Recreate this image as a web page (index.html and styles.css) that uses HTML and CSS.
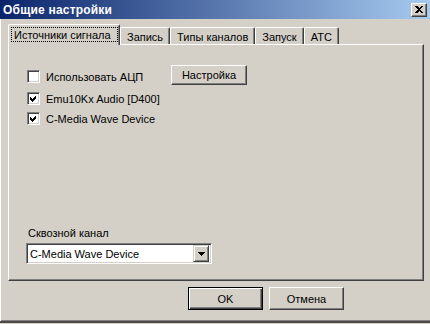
FILE: index.html
```html
<!DOCTYPE html>
<html>
    <head>
        <title>Общие настройки</title>
        <meta charset="UTF-8" />
        <link rel="stylesheet" href="styles.css">
    </head>
    <body>
        <div class="window">
            <div class="titlebar">
                <span class="title">Общие настройки</span>
                <button class="close-button" aria-label="Закрыть">
                    <svg width="8" height="7" viewBox="0 0 8 7" shape-rendering="crispEdges">
                        <path d="M0 0h2l2 2l2 -2h2l-3 3.5l3 3.5h-2l-2 -2l-2 2h-2l3 -3.5z" fill="#000"/>
                    </svg>
                </button>
            </div>

            <div class="dialog-body">
                <div class="tabs">
                    <div class="tab active"><span class="focus">Источники сигнала</span></div>
                    <div class="tab">Запись</div>
                    <div class="tab">Типы каналов</div>
                    <div class="tab">Запуск</div>
                    <div class="tab tab-last">АТС</div>
                </div>

                <div class="panel">
                    <div class="options">
                        <div class="option-row">
                            <label class="check">
                                <span class="box"></span>
                                Использовать АЦП
                            </label>
                            <button class="btn setup-button">Настройка</button>
                        </div>
                        <label class="check">
                            <span class="box checked">
                                <svg width="7" height="7" viewBox="0 0 7 7" shape-rendering="crispEdges">
                                    <path d="M0 2l2 2l4 -4v3l-4 4l-2 -2z" fill="#000"/>
                                </svg>
                            </span>
                            Emu10Kx Audio [D400]
                        </label>
                        <label class="check">
                            <span class="box checked">
                                <svg width="7" height="7" viewBox="0 0 7 7" shape-rendering="crispEdges">
                                    <path d="M0 2l2 2l4 -4v3l-4 4l-2 -2z" fill="#000"/>
                                </svg>
                            </span>
                            C-Media Wave Device
                        </label>
                    </div>

                    <div class="passthrough">
                        <div class="field-label">Сквозной канал</div>
                        <div class="combo">
                            <span class="combo-value">C-Media Wave Device</span>
                            <span class="combo-arrow">
                                <svg width="7" height="4" viewBox="0 0 7 4" shape-rendering="crispEdges">
                                    <path d="M0 0h7l-3.5 4z" fill="#000"/>
                                </svg>
                            </span>
                        </div>
                    </div>
                </div>

                <div class="button-container">
                    <button class="btn default">OK</button>
                    <button class="btn">Отмена</button>
                </div>
            </div>
        </div>
    </body>
</html>
```

FILE: styles.css
```css
body {
    margin: 0;
    background-color: #d4d0c8;
    font-family: "Liberation Sans", Arial, sans-serif;
    font-size: 11px;
    color: #000;
}
.window {
    width: 430px;
    height: 323px;
    box-sizing: border-box;
    display: flex;
    flex-direction: column;
    border-bottom: 2px solid #4a4a4a;
    box-shadow: 0 -1px 0 #808080 inset;
}
.titlebar {
    height: 19px;
    flex: none;
    display: flex;
    align-items: center;
    justify-content: space-between;
    padding-left: 3px;
    padding-right: 3px;
    background: linear-gradient(to right, #0a246a, #a6caf0);
}
.title {
    color: #fff;
    font-weight: bold;
    font-size: 12px;
    letter-spacing: 0.2px;
}
.close-button {
    width: 16px;
    height: 14px;
    padding: 0;
    display: flex;
    align-items: center;
    justify-content: center;
    background-color: #d4d0c8;
    border: 1px solid;
    border-color: #fff #404040 #404040 #fff;
    box-shadow: inset -1px -1px #808080;
}
.dialog-body {
    flex: 1;
    display: flex;
    flex-direction: column;
    padding: 5px 6px 0 7px;
    border-left: 1px solid #fff;
}
.tabs {
    display: flex;
    align-items: flex-end;
    height: 20px;
}
.tab {
    height: 17px;
    box-sizing: border-box;
    padding: 3px 6px 0 6px;
    border-top: 1px solid #fff;
    border-left: 1px solid #fff;
    border-right: 1px solid #404040;
    box-shadow: inset -1px 0 #808080;
    border-radius: 2px 2px 0 0;
    white-space: nowrap;
}
.tab.active {
    position: relative;
    z-index: 1;
    height: 21px;
    margin-bottom: -1px;
    width: 112px;
    padding: 2px 0 0 2px;
    background-color: #d4d0c8;
}
.focus {
    display: block;
    width: 107px;
    height: 15px;
    box-sizing: border-box;
    padding: 1px 0 0 2px;
    border: 1px dotted #000;
}
.panel {
    height: 237px;
    box-sizing: border-box;
    display: flex;
    flex-direction: column;
    justify-content: space-between;
    padding: 20px 0 16px 18px;
    border: 1px solid;
    border-color: #fff #404040 #404040 #fff;
    box-shadow: inset -1px -1px #808080;
}
.options {
    display: flex;
    flex-direction: column;
    gap: 7px;
}
.option-row {
    display: flex;
    align-items: flex-start;
}
.option-row .check {
    width: 144px;
    margin-top: 5px;
}
.check {
    display: flex;
    align-items: center;
    gap: 6px;
    height: 13px;
    white-space: nowrap;
}
.box {
    width: 13px;
    height: 13px;
    box-sizing: border-box;
    flex: none;
    display: flex;
    align-items: center;
    justify-content: center;
    background-color: #fff;
    border: 1px solid;
    border-color: #808080 #fff #fff #808080;
    box-shadow: inset 1px 1px #404040, inset -1px -1px #d4d0c8;
}
.btn {
    height: 23px;
    width: 75px;
    padding: 0;
    font-family: "Liberation Sans", Arial, sans-serif;
    font-size: 11px;
    color: #000;
    background-color: #d4d0c8;
    border: 1px solid;
    border-color: #fff #404040 #404040 #fff;
    box-shadow: inset -1px -1px #808080;
}
.setup-button {
    width: 76px;
    height: 20px;
}
.btn.default {
    border-color: #000;
    box-shadow: inset 1px 1px #fff, inset -1px -1px #404040, inset -2px -2px #808080;
}
.passthrough {
    margin-left: -1px;
}
.field-label {
    padding-left: 2px;
    line-height: 13px;
    margin-bottom: 3px;
}
.combo {
    width: 186px;
    height: 21px;
    box-sizing: border-box;
    display: flex;
    align-items: center;
    justify-content: space-between;
    padding: 2px;
    background-color: #fff;
    border: 1px solid;
    border-color: #808080 #fff #fff #808080;
    box-shadow: inset 1px 1px #404040, inset -1px -1px #d4d0c8;
}
.combo-value {
    padding-left: 1px;
}
.combo-arrow {
    width: 16px;
    height: 17px;
    box-sizing: border-box;
    display: flex;
    align-items: center;
    justify-content: center;
    background-color: #d4d0c8;
    border: 1px solid;
    border-color: #d4d0c8 #404040 #404040 #d4d0c8;
    box-shadow: inset 1px 1px #fff, inset -1px -1px #808080;
}
.button-container {
    display: flex;
    gap: 6px;
    margin-top: 6px;
    padding-left: 180px;
}
```
